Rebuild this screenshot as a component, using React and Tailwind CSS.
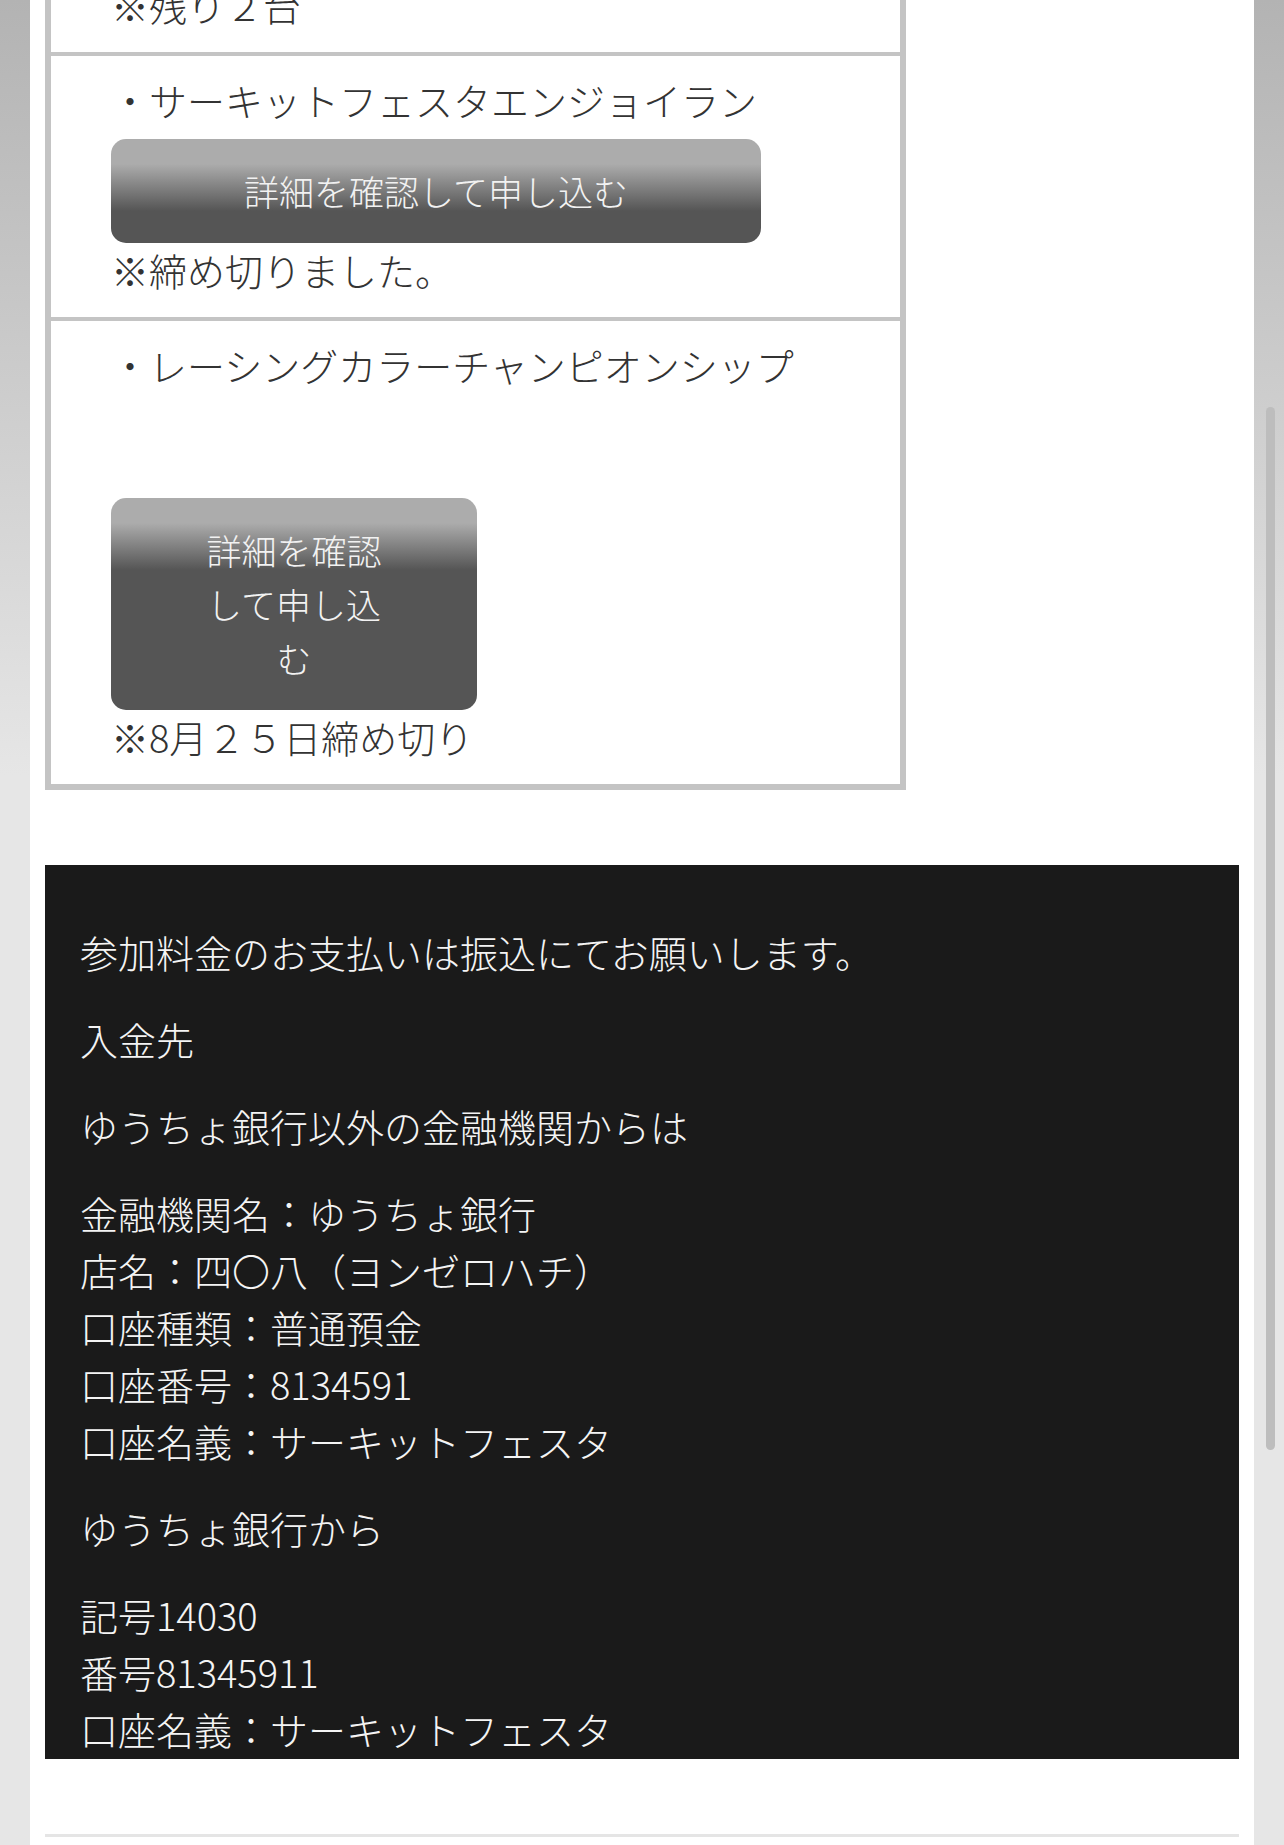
import React from 'react'

const font = "font-['Noto_Sans_CJK_JP','Noto_Sans',sans-serif]"

const ApplyButton = ({ className = '' }) => (
  <div
    className={`rounded-[15px] bg-[linear-gradient(to_bottom,#acacac_25px,#555555_72px)] py-[25px] text-center text-[35px] leading-[54px] text-[#f2f2f2] ${className}`}
  >
    詳細を確認して申し込む
  </div>
)

const Row = ({ children, last }) => (
  <div className={`pl-[60px] pr-[20px] pt-[17px] pb-[20px] ${last ? '' : 'border-b-4 border-[#c4c4c4]'}`}>
    {children}
  </div>
)

const App = () => {
  return (
    <div
      className={`relative h-[1845px] w-full overflow-hidden bg-[linear-gradient(to_bottom,#b3b3b3_0%,#e6e6e6_42%,#e6e6e6_100%)] ${font}`}
    >
      <div className="mx-[30px] flow-root h-full bg-white px-[15px]">
        <div className="-mt-[45px] w-[861px] border-[6px] border-[#c4c4c4] text-[38px] font-light leading-[54px] text-[#333]">
          <Row>
            <p>※残り２台</p>
          </Row>
          <Row>
            <p>・サーキットフェスタエンジョイラン</p>
            <ApplyButton className="mt-[12px] w-[650px]" />
            <p>※締め切りました。</p>
          </Row>
          <Row last>
            <p>・レーシングカラーチャンピオンシップ</p>
            <ApplyButton className="mt-[106px] w-[366px] px-[80px]" />
            <p>※8月２５日締め切り</p>
          </Row>
        </div>

        {/* payment info */}
        <div className="mt-[75px] bg-[#1a1a1a] pl-[35px] pt-[58px] pb-[2px] text-[38px] font-light leading-[57px] text-[#f4f4f4]">
          <div className="flex flex-col gap-[30px]">
            <p>参加料金のお支払いは振込にてお願いします。</p>
            <p>入金先</p>
            <p>ゆうちょ銀行以外の金融機関からは</p>
            <p>
              金融機関名：ゆうちょ銀行
              <br />
              店名：四〇八（ヨンゼロハチ）
              <br />
              口座種類：普通預金
              <br />
              口座番号：8134591
              <br />
              口座名義：サーキットフェスタ
            </p>
            <p>ゆうちょ銀行から</p>
            <p>
              記号14030
              <br />
              番号81345911
              <br />
              口座名義：サーキットフェスタ
            </p>
          </div>
        </div>

        <div className="mt-[75px] h-[3px] bg-[#e5e5e5]" />
      </div>

      {/* scrollbar thumb */}
      <div className="absolute left-[1266px] top-[407px] h-[1043px] w-[9px] rounded-full bg-[#bdbdbd]" />
    </div>
  )
}

export default App
